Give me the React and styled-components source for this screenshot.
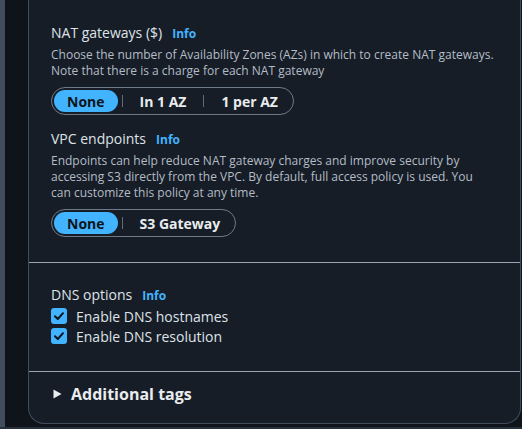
import React from "react";
import styled, { createGlobalStyle } from "styled-components";

const GlobalStyle = createGlobalStyle`
  html, body { margin: 0; padding: 0; background: #0f141a; }
  body { font-family: "Open Sans", "Noto Sans", sans-serif; -webkit-font-smoothing: antialiased; }
  * { box-sizing: border-box; }
`;

const Page = styled.div`
  height: 429px;
  display: flex;
  flex-direction: column;
  overflow: hidden;
  background: #0f141a;
`;

const Body = styled.div`
  flex: 1;
  display: flex;
`;

const Rail = styled.div`
  width: 5px;
  background: #414d5c;
`;

const Main = styled.div`
  flex: 1;
  padding: 0 1px 3px 23px;
  display: flex;
  flex-direction: column;
`;

const BottomStrip = styled.div`
  height: 2px;
  background: #28303b;
`;

const Card = styled.div`
  background: #161d26;
  border: 1px solid #414d5c;
  border-top: none;
  border-radius: 0 0 16px 16px;
  display: flex;
  flex-direction: column;
`;

const Section = styled.div`
  padding: ${(p) => p.$pad};
  display: flex;
  flex-direction: column;
  gap: ${(p) => p.$gap || "0px"};
`;

const Divider = styled.div`
  height: 1px;
  background: #9aa4b0;
`;

const Field = styled.div`
  display: flex;
  flex-direction: column;
`;

const Label = styled.div`
  display: flex;
  align-items: baseline;
  gap: 10px;
  font-size: 14px;
  line-height: ${(p) => p.$lh || "22px"};
  color: #dfe3e8;
`;

const Info = styled.span`
  font-size: 12px;
  font-weight: 700;
  color: #42b4ff;
`;

const Desc = styled.div`
  margin-top: 2px;
  font-size: 12px;
  line-height: 16px;
  color: #b4bcc6;
`;

const Segmented = styled.div`
  margin-top: 8px;
  align-self: flex-start;
  display: flex;
  align-items: center;
  height: 28px;
  padding: 2px;
  border: 1px solid #6f7a88;
  border-radius: 14px;
`;

const SegButton = styled.div`
  height: 22px;
  display: flex;
  align-items: center;
  padding: 0 13px;
  border-radius: 11px;
  font-size: 14px;
  font-weight: 700;
  color: ${(p) => (p.$active ? "#0f141a" : "#e9ecef")};
  background: ${(p) => (p.$active ? "#42b4ff" : "transparent")};
`;

const SegSep = styled.div`
  width: 1px;
  height: 12px;
  margin: 0 4px;
  background: #5f6b7a;
`;

const CheckRow = styled.label`
  display: flex;
  align-items: center;
  gap: 9px;
  height: 20px;
  font-size: 14px;
  color: #dfe3e8;
`;

const ExpandHeader = styled.div`
  display: flex;
  align-items: center;
  gap: 9px;
  height: 22px;
  font-size: 16px;
  font-weight: 700;
  color: #e9ecef;
`;

const Check = () => (
  <svg width="16" height="16" viewBox="0 0 16 16">
    <rect x="0" y="0" width="16" height="16" rx="3" fill="#42b4ff" />
    <path d="M4 8.3 L6.8 11 L12 5.2" fill="none" stroke="#0f141a" strokeWidth="2" strokeLinecap="round" strokeLinejoin="round" />
  </svg>
);

const Caret = () => (
  <svg width="9" height="10" viewBox="0 0 9 10">
    <path d="M0.5 0.5 L8.5 5 L0.5 9.5 Z" fill="#e9ecef" />
  </svg>
);

function SegmentedControl({ options, active }) {
  return (
    <Segmented>
      {options.map((o, i) => (
        <React.Fragment key={o}>
          {i > 0 && <SegSep />}
          <SegButton $active={o === active}>{o}</SegButton>
        </React.Fragment>
      ))}
    </Segmented>
  );
}

export default function App() {
  return (
    <>
      <GlobalStyle />
      <Page>
        <Body>
          <Rail />
          <Main>
            <Card>
              <Section $pad="22px 22px 25px" $gap="13px">
                <Field>
                  <Label>
                    NAT gateways ($) <Info>Info</Info>
                  </Label>
                  <Desc>
                    Choose the number of Availability Zones (AZs) in which to create NAT gateways.
                    <br />
                    Note that there is a charge for each NAT gateway
                  </Desc>
                  <SegmentedControl options={["None", "In 1 AZ", "1 per AZ"]} active="None" />
                </Field>
                <Field>
                  <Label>
                    VPC endpoints <Info>Info</Info>
                  </Label>
                  <Desc>
                    Endpoints can help reduce NAT gateway charges and improve security by
                    <br />
                    accessing S3 directly from the VPC. By default, full access policy is used. You
                    <br />
                    can customize this policy at any time.
                  </Desc>
                  <SegmentedControl options={["None", "S3 Gateway"]} active="None" />
                </Field>
              </Section>
              <Divider />
              <Section $pad="22px 22px 25px">
                <Label $lh="20px">
                  DNS options <Info>Info</Info>
                </Label>
                <CheckRow>
                  <Check /> Enable DNS hostnames
                </CheckRow>
                <CheckRow>
                  <Check /> Enable DNS resolution
                </CheckRow>
              </Section>
              <Divider />
              <Section $pad="11px 22px 18px 24px">
                <ExpandHeader>
                  <Caret /> Additional tags
                </ExpandHeader>
              </Section>
            </Card>
          </Main>
        </Body>
        <BottomStrip />
      </Page>
    </>
  );
}
